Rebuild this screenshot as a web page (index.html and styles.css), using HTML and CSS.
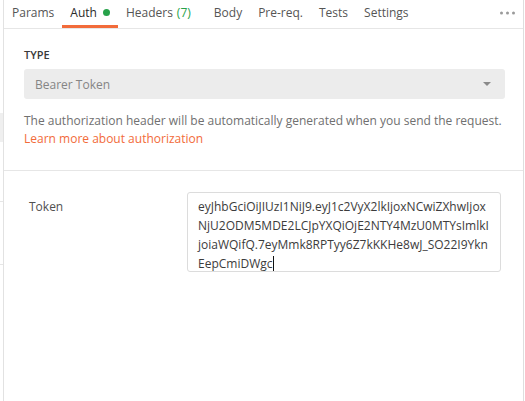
FILE: index.html
```html
<!DOCTYPE html>
<html lang="en">
<head>
<meta charset="utf-8">
<title>Auth</title>
<link rel="stylesheet" href="styles.css">
</head>
<body>
<div class="app">
  <div class="gutter">
    <div class="g-top"></div>
    <div class="g-band"></div>
    <div class="g-row1"></div>
    <div class="g-row2"></div>
  </div>
  <div class="panel">
    <nav class="tabs">
      <div class="tab">Params</div>
      <div class="tab active">Auth <span class="dot"></span></div>
      <div class="tab tab-wide">Headers <span class="count">(7)</span></div>
      <div class="tab">Body</div>
      <div class="tab">Pre-req.</div>
      <div class="tab">Tests</div>
      <div class="tab">Settings</div>
      <div class="more">
        <svg width="15" height="4" viewBox="0 0 15 4"><circle cx="1.5" cy="2" r="1.5" fill="#9a9a9a"/><circle cx="7.5" cy="2" r="1.5" fill="#9a9a9a"/><circle cx="13.5" cy="2" r="1.5" fill="#9a9a9a"/></svg>
      </div>
    </nav>
    <section class="type-section">
      <div class="label">TYPE</div>
      <div class="select">
        <span>Bearer Token</span>
        <svg class="caret-down" width="8" height="4" viewBox="0 0 8 4"><path d="M0 0h8L4 4z" fill="#8a8a8a"/></svg>
      </div>
      <p class="desc">The authorization header will be automatically generated when you send the request.</p>
      <a class="link">Learn more about authorization</a>
    </section>
    <section class="token-section">
      <div class="token-label">Token</div>
      <div class="token-box">
        <div>eyJhbGciOiJIUzI1NiJ9.eyJ1c2VyX2lkIjoxNCwiZXhwIjox</div>
        <div>NjU2ODM5MDE2LCJpYXQiOjE2NTY4MzU0MTYsImlkI</div>
        <div>joiaWQifQ.7eyMmk8RPTyy6Z7kKKHe8wJ_SO22I9Ykn</div>
        <div>EepCmiDWgc<span class="cursor"></span></div>
      </div>
    </section>
  </div>
</div>
</body>
</html>
```
FILE: styles.css
```css
html, body {
  margin: 0;
  padding: 0;
  background: #ffffff;
  font-family: "Open Sans", "Liberation Sans", sans-serif;
}

.app {
  display: flex;
  height: 401px;
  overflow: hidden;
}

.gutter {
  width: 3px;
  border-right: 1px solid #e2e2e2;
  display: flex;
  flex-direction: column;
}

.g-top { height: 113px; }
.g-band { height: 29px; background: #efefef; }
.g-row1 { height: 59px; border-bottom: 1px solid #e6e6e6; }
.g-row2 { height: 62px; border-bottom: 1px solid #e6e6e6; }

.panel {
  width: 519px;
  border-right: 1px solid #dedede;
  display: flex;
  flex-direction: column;
}

.tabs {
  display: flex;
  height: 28px;
  border-bottom: 1px solid #e6e6e6;
}

.tab {
  display: flex;
  align-items: center;
  padding: 0 8px 1px;
  font-size: 12px;
  color: #555555;
  border-bottom: 3px solid transparent;
  white-space: nowrap;
}

.tab.active {
  color: #2a2a2a;
  border-bottom-color: #f26b3a;
}

.tab-wide { padding-right: 15px; }

.dot {
  width: 7px;
  height: 7px;
  border-radius: 50%;
  background: #27a24a;
  margin-left: 6px;
}

.count {
  color: #27a24a;
  margin-left: 4px;
}

.more {
  margin-left: auto;
  display: flex;
  align-items: center;
  padding: 0 8px 3px 0;
}

.type-section {
  padding: 18px 18px 22px 20px;
  border-bottom: 1px solid #e6e6e6;
}

.label {
  font-size: 11px;
  font-weight: 600;
  line-height: 16px;
  color: #3a3a3a;
  margin-bottom: 6px;
}

.select {
  height: 30px;
  box-sizing: border-box;
  background: #ececec;
  border-radius: 3px;
  display: flex;
  align-items: center;
  justify-content: space-between;
  padding: 0 14px 0 11px;
  font-size: 12px;
  color: #858585;
}

.desc {
  margin: 13px 0 0;
  font-size: 12px;
  line-height: 18px;
  color: #707070;
  white-space: nowrap;
}

.link {
  display: block;
  font-size: 12px;
  line-height: 18px;
  color: #f26b3a;
}

.token-section {
  display: flex;
  padding: 21px 22px 0 25px;
}

.token-label {
  width: 158px;
  flex: none;
  margin-top: 6px;
  font-size: 12px;
  line-height: 18px;
  color: #505050;
}

.token-box {
  box-sizing: border-box;
  width: 314px;
  height: 80px;
  border: 1px solid #dcdcdc;
  border-radius: 3px;
  padding: 4px 10px;
  font-size: 12px;
  line-height: 19px;
  color: #3c3c3c;
  overflow: hidden;
  white-space: nowrap;
}

.cursor {
  display: inline-block;
  width: 0;
  height: 15px;
  border-left: 1px solid #111;
  vertical-align: -3px;
}
```
